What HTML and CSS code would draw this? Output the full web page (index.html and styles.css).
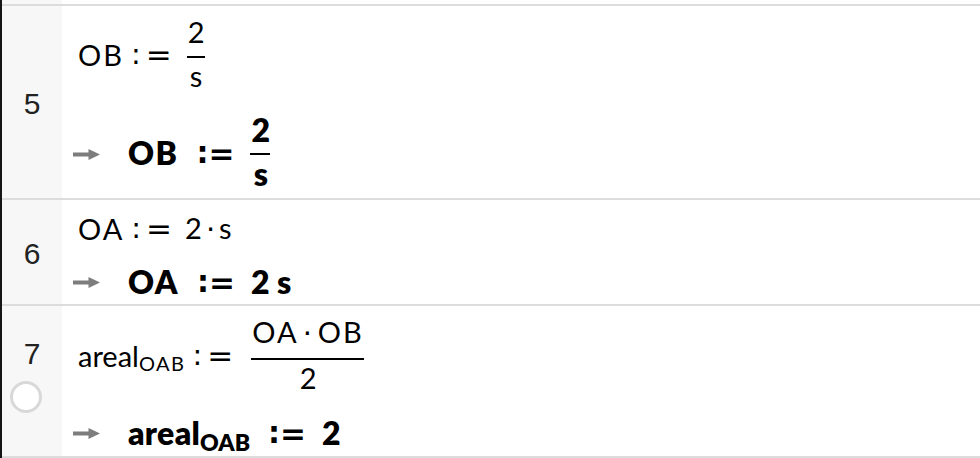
FILE: index.html
```html
<!DOCTYPE html>
<html lang="no">
<head>
<meta charset="utf-8">
<title>CAS</title>
<link rel="stylesheet" href="styles.css">
</head>
<body>
<div class="cas">
  <div class="row prev"><div class="gutter"></div><div class="cell"></div></div>

  <div class="row r5">
    <div class="gutter"><span class="num">5</span></div>
    <div class="cell">
      <div class="line in fr">
        <span class="t id caps">OB</span><span class="t colon">:</span><span class="t eq">=</span>
        <span class="frac rhs"><span class="n">2</span><span class="d">s</span></span>
      </div>
      <div class="line out fr">
        <svg class="arrow" viewBox="0 0 27 11"><rect x="0" y="3.5" width="18" height="4" fill="#7d7d7d"/><polygon points="15.5,0 27,5.5 15.5,11" fill="#7d7d7d"/></svg>
        <span class="t id caps">OB</span><span class="t colon">:</span><span class="t eq">=</span>
        <span class="frac rhs"><span class="n">2</span><span class="d">s</span></span>
      </div>
    </div>
  </div>

  <div class="row r6">
    <div class="gutter"><span class="num">6</span></div>
    <div class="cell">
      <div class="line in">
        <span class="t id caps">OA</span><span class="t colon">:</span><span class="t eq">=</span>
        <span class="t rhs near">2<span class="dot">·</span>s</span>
      </div>
      <div class="line out">
        <svg class="arrow" viewBox="0 0 27 11"><rect x="0" y="3.5" width="18" height="4" fill="#7d7d7d"/><polygon points="15.5,0 27,5.5 15.5,11" fill="#7d7d7d"/></svg>
        <span class="t id caps">OA</span><span class="t colon">:</span><span class="t eq">=</span>
        <span class="t rhs">2 s</span>
      </div>
    </div>
  </div>

  <div class="row r7 last">
    <div class="gutter"><span class="num">7</span><span class="marble"></span></div>
    <div class="cell">
      <div class="line in fr">
        <span class="t id">areal<span class="sub">OAB</span></span><span class="t colon">:</span><span class="t eq">=</span>
        <span class="frac rhs far"><span class="n caps">OA<span class="dot wide">·</span>OB</span><span class="d">2</span></span>
      </div>
      <div class="line out">
        <svg class="arrow" viewBox="0 0 27 11"><rect x="0" y="3.5" width="18" height="4" fill="#7d7d7d"/><polygon points="15.5,0 27,5.5 15.5,11" fill="#7d7d7d"/></svg>
        <span class="t id word">areal<span class="sub">OAB</span></span><span class="t colon">:</span><span class="t eq">=</span>
        <span class="t rhs">2</span>
      </div>
    </div>
  </div>
</div>
</body>
</html>
```

FILE: styles.css
```css
html, body {
  margin: 0;
  background: #ffffff;
}

.cas {
  width: 978px;
  border-left: 2px solid #151515;
  font-family: "Lato", "Open Sans", sans-serif;
  color: #000000;
}

.row {
  display: grid;
  grid-template-columns: 60px 1fr;
  border-top: 2px solid #dcdcdc;
}

.row.prev {
  border-top: 0;
  height: 4px;
}

.row.last {
  border-bottom: 2px solid #dcdcdc;
}

.r5 { height: 192px; }
.r6 { height: 104px; }
.r7 { height: 150px; }

.gutter {
  background: #f7f7f7;
  display: flex;
  flex-direction: column;
  align-items: center;
  justify-content: center;
  padding-top: 4px;
  box-sizing: border-box;
}

.num {
  font-family: "Liberation Sans", Arial, sans-serif;
  font-size: 30px;
  line-height: 1;
  color: #222222;
}

.marble {
  align-self: flex-start;
  margin: 12px 0 14px 8px;
  width: 26px;
  height: 26px;
  border: 3px solid #d8d8d8;
  border-radius: 50%;
  background: #ffffff;
}

.cell {
  display: flex;
  flex-direction: column;
}

.r5 .cell { padding-top: 11px; gap: 17px; }
.r6 .cell { padding-top: 13px; gap: 22px; }
.r7 .cell { padding-top: 11px; gap: 18px; }

.line {
  display: flex;
  align-items: center;
  white-space: nowrap;
}

.in {
  padding-left: 16px;
  font-size: 29px;
  line-height: 1;
  font-weight: 400;
}

.out {
  padding-left: 11px;
  font-size: 32px;
  line-height: 1;
  font-weight: 800;
}

.in .caps { letter-spacing: 2px; }
.out .caps { letter-spacing: 1.5px; }
.out .word { letter-spacing: 0.3px; }

.in.fr > .t { padding-bottom: 5px; }
.out.fr > .t { padding-bottom: 3px; }

.arrow {
  flex: none;
  width: 27px;
  height: 11px;
  margin-right: 28px;
}

.colon, .eq {
  font-family: "DejaVu Sans", sans-serif;
  letter-spacing: 0;
}

.in .colon {
  margin-left: 7px;
  font-size: 29px;
}

.in .eq {
  margin-left: 5px;
  font-size: 31px;
  line-height: 29px;
}

.in .rhs { margin-left: 15px; }
.in .rhs.near { margin-left: 13px; }
.in .rhs.far { margin-left: 18px; }

.out .colon {
  margin-left: 18px;
  font-size: 30px;
  line-height: 32px;
}

.out .eq {
  margin-left: 0;
  font-size: 31px;
  line-height: 32px;
}

.out .rhs { margin-left: 16px; }

.dot {
  font-family: "DejaVu Sans", sans-serif;
  margin: 0 4px;
  letter-spacing: 0;
}

.dot.wide { margin: 0 6px 0 4px; }

.sub {
  line-height: 0;
}

.in .sub {
  font-size: 20px;
  vertical-align: -4px;
  letter-spacing: 1.5px;
}

.out .sub {
  font-size: 23px;
  vertical-align: -6px;
  letter-spacing: 0;
}

.frac {
  display: flex;
  flex-direction: column;
  align-items: stretch;
}

.frac > span {
  display: block;
  text-align: center;
}

.frac .n {
  border-bottom: 2px solid #000000;
}

.in .frac .n { padding: 0 0 10px 1px; }
.in .frac .d { padding: 3px 0 7px 1px; }

.out .frac .n { padding: 0 0 7px 1px; }
.out .frac .d { padding: 3px 0 4px 1px; }
```
